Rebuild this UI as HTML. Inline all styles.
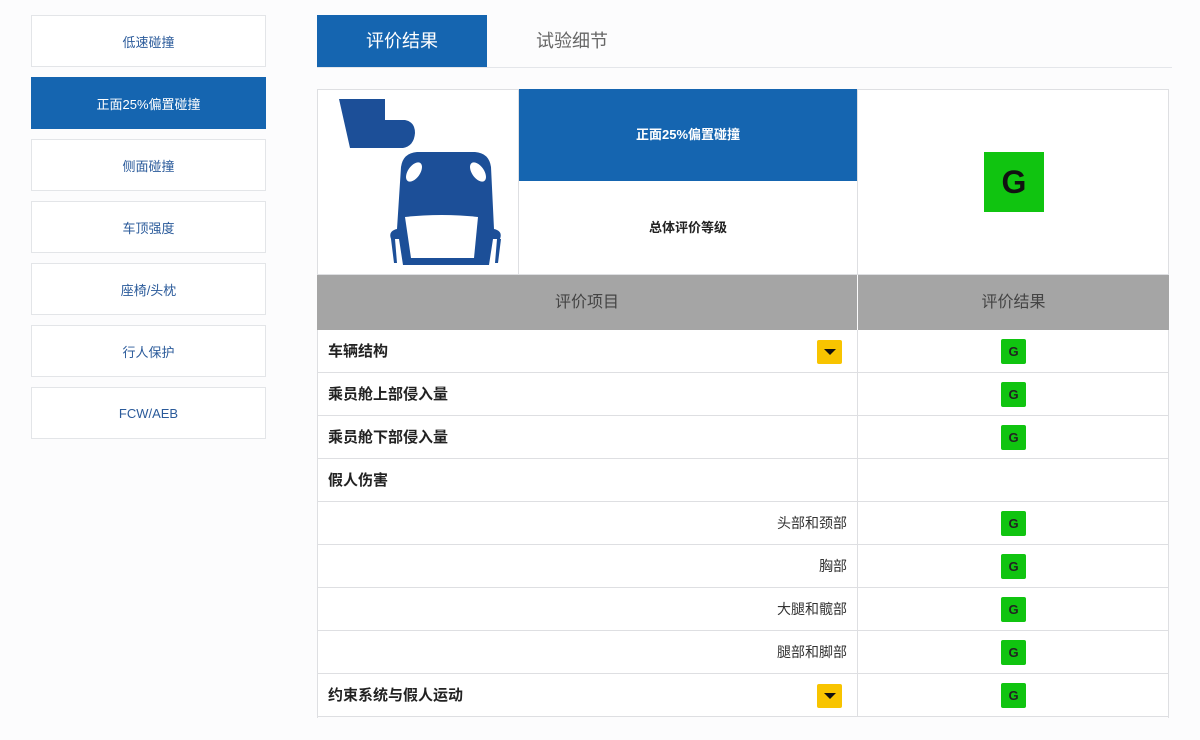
<!DOCTYPE html>
<html><head><meta charset="utf-8"><style>
*{margin:0;padding:0;box-sizing:border-box}
body{width:1200px;height:740px;background:#fcfcfd;font-family:"Liberation Sans","Noto Sans CJK SC",sans-serif;position:relative;overflow:hidden}
.a{position:absolute}
.nav{position:absolute;left:31px;width:235px;height:52px;border:1px solid #e3e5e8;background:#fff;color:#2a5a9a;font-size:13px;display:flex;align-items:center;justify-content:center}
.nav.on{background:#1565b0;color:#fff;border-color:#1565b0}
.row{position:absolute;left:317px;width:852px;height:43px;border-bottom:1px solid #dedfe2;background:#fff}
.row .l{position:absolute;left:11px;top:0;line-height:43px;font-size:15px;font-weight:bold;color:#222}
.row .r{position:absolute;right:322px;top:0;line-height:43px;font-size:14px;color:#333}
.row .v{position:absolute;left:540px;top:0;width:1px;height:43px;background:#dedfe2}
.g{position:absolute;left:684px;top:9px;width:25px;height:25px;background:#10c410;border-radius:2px;color:#222;font-weight:bold;font-size:13px;text-align:center;line-height:25px}
.y{position:absolute;left:500px;top:10px;width:25px;height:24px;background:#f8c400;border-radius:2px}
.y:after{content:"";position:absolute;left:7px;top:9px;border-left:6px solid transparent;border-right:6px solid transparent;border-top:6px solid #111}
</style></head><body>
<div class="nav" style="top:15px">低速碰撞</div>
<div class="nav on" style="top:77px">正面25%偏置碰撞</div>
<div class="nav" style="top:139px">侧面碰撞</div>
<div class="nav" style="top:201px">车顶强度</div>
<div class="nav" style="top:263px">座椅/头枕</div>
<div class="nav" style="top:325px">行人保护</div>
<div class="nav" style="top:387px">FCW/AEB</div>

<div class="a" style="left:317px;top:15px;width:170px;height:52px;background:#1565b0;color:#fff;font-size:18px;line-height:52px;text-align:center">评价结果</div>
<div class="a" style="left:487px;top:15px;width:170px;height:52px;color:#666;font-size:18px;line-height:52px;text-align:center">试验细节</div>
<div class="a" style="left:317px;top:67px;width:855px;height:1px;background:#e4e6ea"></div>

<div class="a" style="left:317px;top:89px;width:852px;height:186px;background:#fff;border:1px solid #dedfe2"></div>
<svg class="a" style="left:317px;top:89px" width="201" height="186" viewBox="0 0 201 186">
<path d="M22 10 L68 10 L68 31 L88 31 Q98 33 98 44 Q97 57 86 59 L33 59 Z" fill="#1c4f98"/>
<path d="M84 78 Q86 64 100 63 L158 63 Q172 64 174 78 L177 140 Q186 142 183 150 L176 150 L172 176 L86 176 L82 150 L74 150 Q71 142 80 140 Z" fill="#1c4f98"/>
<path d="M74 150 L78 150 L80 174 L77 174 Z M180 150 L184 150 L181 174 L178 174 Z" fill="#1c4f98"/>
<path d="M88 128 Q125 124 161 128 L157 169 L94 169 Z" fill="#fff"/>
<ellipse cx="97" cy="83" rx="6" ry="11" transform="rotate(35 97 83)" fill="#fff"/>
<ellipse cx="161" cy="83" rx="6" ry="11" transform="rotate(-35 161 83)" fill="#fff"/>
</svg>
<div class="a" style="left:518px;top:89px;width:1px;height:186px;background:#dedfe2"></div>
<div class="a" style="left:519px;top:89px;width:338px;height:92px;background:#1565b0;color:#fff;font-size:13px;font-weight:bold;text-align:center;line-height:92px">正面25%偏置碰撞</div>
<div class="a" style="left:519px;top:181px;width:338px;height:94px;color:#222;font-size:13px;font-weight:bold;text-align:center;line-height:94px">总体评价等级</div>
<div class="a" style="left:857px;top:89px;width:1px;height:186px;background:#dedfe2"></div>
<div class="a" style="left:984px;top:152px;width:60px;height:60px;background:#10c410;color:#111;font-size:32px;font-weight:bold;text-align:center;line-height:60px">G</div>

<div class="a" style="left:317px;top:275px;width:540px;height:55px;background:#a5a5a5;color:#444;font-size:16px;text-align:center;line-height:55px">评价项目</div>
<div class="a" style="left:858px;top:275px;width:311px;height:55px;background:#a5a5a5;color:#444;font-size:16px;text-align:center;line-height:55px">评价结果</div>

<div class="row" style="top:330px"><span class="l">车辆结构</span><div class="y"></div><div class="v"></div><div class="g">G</div></div>
<div class="row" style="top:373px"><span class="l">乘员舱上部侵入量</span><div class="v"></div><div class="g">G</div></div>
<div class="row" style="top:416px"><span class="l">乘员舱下部侵入量</span><div class="v"></div><div class="g">G</div></div>
<div class="row" style="top:459px"><span class="l">假人伤害</span><div class="v"></div></div>
<div class="row" style="top:502px"><span class="r">头部和颈部</span><div class="v"></div><div class="g">G</div></div>
<div class="row" style="top:545px"><span class="r">胸部</span><div class="v"></div><div class="g">G</div></div>
<div class="row" style="top:588px"><span class="r">大腿和髋部</span><div class="v"></div><div class="g">G</div></div>
<div class="row" style="top:631px"><span class="r">腿部和脚部</span><div class="v"></div><div class="g">G</div></div>
<div class="row" style="top:674px"><span class="l">约束系统与假人运动</span><div class="y"></div><div class="v"></div><div class="g">G</div></div>
<div class="a" style="left:317px;top:330px;width:1px;height:388px;background:#dedfe2"></div>
<div class="a" style="left:1168px;top:330px;width:1px;height:388px;background:#dedfe2"></div>
</body></html>
